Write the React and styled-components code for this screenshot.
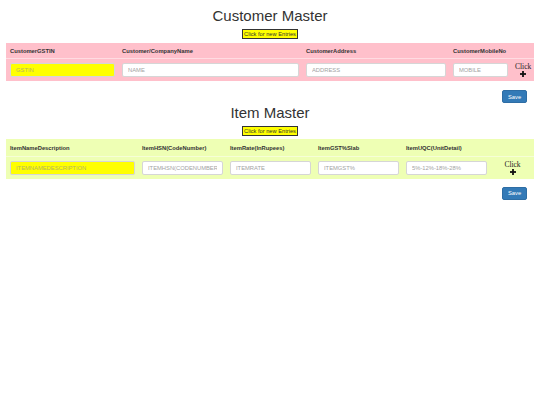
import React from "react";
import styled, { createGlobalStyle } from "styled-components";

const Global = createGlobalStyle`
  html, body { margin: 0; padding: 0; background: #fff; }
  body { font-family: "Liberation Sans", Arial, sans-serif; color: #333; }
  * { box-sizing: border-box; }
`;

const Page = styled.div`
  padding: 0 6px;
`;

const Section = styled.section`
  display: flex;
  flex-direction: column;
  padding-top: ${(p) => p.$top}px;
`;

const Title = styled.h3`
  margin: 0;
  font-size: 15px;
  line-height: 17px;
  font-weight: normal;
  text-align: center;
  color: #333;
`;

const EntryRow = styled.div`
  display: flex;
  justify-content: center;
  margin-top: 4.5px;
`;

const EntryButton = styled.button`
  height: 10px;
  padding: 0 1px;
  background: #ffff00;
  border: 1px solid #333;
  font-family: "Liberation Sans", Arial, sans-serif;
  font-size: 5.7px;
  line-height: 8px;
  color: #333;
`;

const Table = styled.div`
  margin-top: ${(p) => p.$gap}px;
  background: ${(p) => p.$bg};
  display: grid;
  grid-template-columns: ${(p) => p.$cols};
`;

const HeadCell = styled.div`
  height: ${(p) => p.$h}px;
  display: flex;
  align-items: center;
  padding: 0 3px 0 4px;
  font-size: 5.8px;
  font-weight: bold;
  color: #333;
  white-space: nowrap;
`;

const BodyCell = styled.div`
  height: ${(p) => p.$h}px;
  display: flex;
  align-items: center;
  justify-content: ${(p) => (p.$center ? "center" : "flex-start")};
  padding: 0 3px 0 4px;
  border-top: 1px solid rgba(255, 255, 255, 0.45);
`;

const Field = styled.input`
  width: 100%;
  height: 13.5px;
  padding: 0 5px;
  border: 1px solid #d6d6d6;
  border-radius: 2px;
  background: ${(p) => (p.$highlight ? "#ffff00" : "#fff")};
  font-family: "Liberation Sans", Arial, sans-serif;
  font-size: 5.8px;
  color: #555;
  outline: none;
  &::placeholder {
    color: ${(p) => (p.$highlight ? "#b5b560" : "#a3a3a3")};
  }
`;

const AddCell = styled.div`
  display: flex;
  flex-direction: column;
  align-items: center;
  gap: 1px;
  font-family: "Liberation Serif", "Times New Roman", serif;
  font-size: 7.5px;
  line-height: 7px;
  color: #222;
`;

const PlusIcon = () => (
  <svg width="6" height="6" viewBox="0 0 6 6" aria-hidden="true">
    <rect x="2.1" y="0" width="1.8" height="6" fill="#111" />
    <rect x="0" y="2.1" width="6" height="1.8" fill="#111" />
  </svg>
);

const SaveRow = styled.div`
  display: flex;
  justify-content: flex-end;
  padding-right: 7px;
  margin-top: ${(p) => p.$gap}px;
`;

const SaveButton = styled.button`
  width: 25px;
  height: 13px;
  padding: 0;
  background: #337ab7;
  border: 1px solid #2e6da4;
  border-radius: 2px;
  color: #fff;
  font-family: "Liberation Sans", Arial, sans-serif;
  font-size: 5.8px;
`;

const customerCols = [
  { label: "CustomerGSTIN", ph: "GSTIN", hl: true },
  { label: "Customer/CompanyName", ph: "NAME" },
  { label: "CustomerAddress", ph: "ADDRESS" },
  { label: "CustomerMobileNo", ph: "MOBILE" },
];

const itemCols = [
  { label: "ItemNameDescription", ph: "ITEMNAMEDESCRIPTION", hl: true },
  { label: "ItemHSN(CodeNumber)", ph: "ITEMHSN(CODENUMBER)" },
  { label: "ItemRate(InRupees)", ph: "ITEMRATE" },
  { label: "ItemGST%Slab", ph: "ITEMGST%" },
  { label: "ItemUQC(UnitDetail)", ph: "5%-12%-18%-28%" },
];

function MasterTable({ title, cols, grid, bg, headH, bodyH, top, btnGap, tableGap, saveGap }) {
  return (
    <Section $top={top}>
      <Title>{title}</Title>
      <EntryRow>
        <EntryButton>Click for new Entries</EntryButton>
      </EntryRow>
      <Table $bg={bg} $cols={grid} $gap={tableGap}>
        {cols.map((c) => (
          <HeadCell key={c.label} $h={headH}>{c.label}</HeadCell>
        ))}
        <HeadCell $h={headH} />
        {cols.map((c) => (
          <BodyCell key={c.ph} $h={bodyH}>
            <Field placeholder={c.ph} $highlight={c.hl} />
          </BodyCell>
        ))}
        <BodyCell $h={bodyH} $center>
          <AddCell>
            <span>Click</span>
            <PlusIcon />
          </AddCell>
        </BodyCell>
      </Table>
      <SaveRow $gap={saveGap}>
        <SaveButton>Save</SaveButton>
      </SaveRow>
    </Section>
  );
}

export default function App() {
  return (
    <Page>
      <Global />
      <MasterTable
        title="Customer Master"
        cols={customerCols}
        grid="112px 184px 147px 62px 1fr"
        bg="#ffc0cb"
        headH={15}
        bodyH={23}
        top={7}
        tableGap={4.5}
        saveGap={9}
      />
      <MasterTable
        title="Item Master"
        cols={itemCols}
        grid="132px 88px 88px 88px 88px 1fr"
        bg="#eeffb4"
        headH={17}
        bodyH={22.5}
        top={1}
        tableGap={3.5}
        saveGap={8}
      />
    </Page>
  );
}
